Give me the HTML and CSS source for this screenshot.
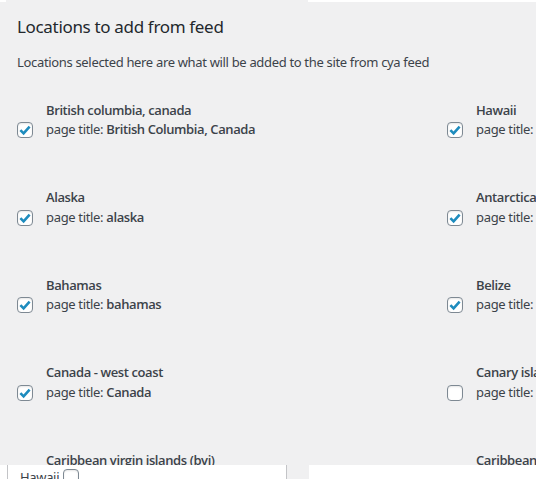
FILE: index.html
```html
<!DOCTYPE html>
<html lang="en">
<head>
    <meta charset="UTF-8">
    <meta name="viewport" content="width=device-width, initial-scale=1.0">
    <title>Locations to add from feed</title>
    <link rel="stylesheet" href="styles.css">
</head>
<body>
    <div class="tab"></div>
    <div class="panel">
        <h2>Locations to add from feed</h2>
        <p class="desc">Locations selected here are what will be added to the site from cya feed</p>

        <!-- locations grid, two per row -->
        <div class="locations">
            <label class="location">
                <span class="name">British columbia, canada</span>
                <span class="check on"><svg viewBox="0 0 14 14"><path d="M2.4 7.2 L5.6 10.4 L11.6 3.6"/></svg></span>
                <span class="page">page title: <strong>British Columbia, Canada</strong></span>
            </label>
            <label class="location">
                <span class="name">Hawaii</span>
                <span class="check on"><svg viewBox="0 0 14 14"><path d="M2.4 7.2 L5.6 10.4 L11.6 3.6"/></svg></span>
                <span class="page">page title: <strong>Hawaii</strong></span>
            </label>
            <label class="location">
                <span class="name">Alaska</span>
                <span class="check on"><svg viewBox="0 0 14 14"><path d="M2.4 7.2 L5.6 10.4 L11.6 3.6"/></svg></span>
                <span class="page">page title: <strong>alaska</strong></span>
            </label>
            <label class="location">
                <span class="name">Antarctica</span>
                <span class="check on"><svg viewBox="0 0 14 14"><path d="M2.4 7.2 L5.6 10.4 L11.6 3.6"/></svg></span>
                <span class="page">page title: <strong>antarctica</strong></span>
            </label>
            <label class="location">
                <span class="name">Bahamas</span>
                <span class="check on"><svg viewBox="0 0 14 14"><path d="M2.4 7.2 L5.6 10.4 L11.6 3.6"/></svg></span>
                <span class="page">page title: <strong>bahamas</strong></span>
            </label>
            <label class="location">
                <span class="name">Belize</span>
                <span class="check on"><svg viewBox="0 0 14 14"><path d="M2.4 7.2 L5.6 10.4 L11.6 3.6"/></svg></span>
                <span class="page">page title: <strong>belize</strong></span>
            </label>
            <label class="location">
                <span class="name">Canada - west coast</span>
                <span class="check on"><svg viewBox="0 0 14 14"><path d="M2.4 7.2 L5.6 10.4 L11.6 3.6"/></svg></span>
                <span class="page">page title: <strong>Canada</strong></span>
            </label>
            <label class="location">
                <span class="name">Canary islands</span>
                <span class="check"></span>
                <span class="page">page title: <strong>canary islands</strong></span>
            </label>
            <label class="location">
                <span class="name">Caribbean virgin islands (bvi)</span>
                <span class="check on"><svg viewBox="0 0 14 14"><path d="M2.4 7.2 L5.6 10.4 L11.6 3.6"/></svg></span>
                <span class="page">page title: <strong>bvi</strong></span>
            </label>
            <label class="location">
                <span class="name">Caribbean islands</span>
                <span class="check on"><svg viewBox="0 0 14 14"><path d="M2.4 7.2 L5.6 10.4 L11.6 3.6"/></svg></span>
                <span class="page">page title: <strong>caribbean</strong></span>
            </label>
        </div>
    </div>

    <div class="bottom">
        <div class="dropdown">Hawaii <span class="check"></span></div>
        <div class="gutter"></div>
    </div>
</body>
</html>
```

FILE: styles.css
```css
body {
    font-family: "Noto Sans", "Open Sans", sans-serif;
    font-size: 13px;
    letter-spacing: -0.33px;
    margin: 0;
    padding: 0;
    background-color: #ffffff;
    color: #3c434a;
    height: 479px;
    overflow: hidden;
}

.tab {
    height: 2px;
    width: 302px;
    margin-left: 6px;
    background-color: #f0f0f1;
}

.panel {
    height: 463px;
    overflow: hidden;
    background-color: #f0f0f1;
    padding: 0 17px;
}

h2 {
    margin: 0;
    padding-top: 14px;
    font-size: 17px;
    line-height: 22px;
    font-weight: 400;
    letter-spacing: -0.33px;
    color: #23282d;
}

.desc {
    margin: 15px 0 0;
    line-height: 19.5px;
}

.locations {
    display: grid;
    grid-template-columns: 430px 430px;
    row-gap: 48.5px;
    margin-top: 28px;
}

.location {
    display: grid;
    grid-template-columns: 29px auto;
    line-height: 19.5px;
    white-space: nowrap;
}

.name,
.page strong {
    font-family: "Open Sans", "Noto Sans", sans-serif;
    font-weight: 600;
    letter-spacing: -0.4px;
}

.name {
    grid-column: 2;
    grid-row: 1;
}

.page {
    grid-column: 2;
    grid-row: 2;
}

.location .check {
    grid-column: 1;
    grid-row: 2;
    align-self: center;
    margin-top: 1px;
}

.check {
    display: inline-block;
    box-sizing: border-box;
    width: 16px;
    height: 16px;
    border: 1px solid #7e8993;
    border-radius: 4px;
    background-color: #ffffff;
    box-shadow: inset 0 1px 2px rgba(0, 0, 0, 0.1);
}

.check svg {
    display: block;
    width: 14px;
    height: 14px;
    fill: none;
    stroke: #1e8cbe;
    stroke-width: 2.6;
}

.bottom {
    display: flex;
    height: 14px;
}

.dropdown {
    width: 266px;
    margin-left: 7px;
    padding-left: 12px;
    border-left: 1px solid #c3c4c7;
    border-right: 1px solid #c3c4c7;
    background-color: #ffffff;
    line-height: 20px;
    padding-top: 2px;
}

.dropdown .check {
    vertical-align: -3px;
    margin-left: 1px;
}

.gutter {
    width: 22px;
    background-color: #f0f0f1;
}
```
